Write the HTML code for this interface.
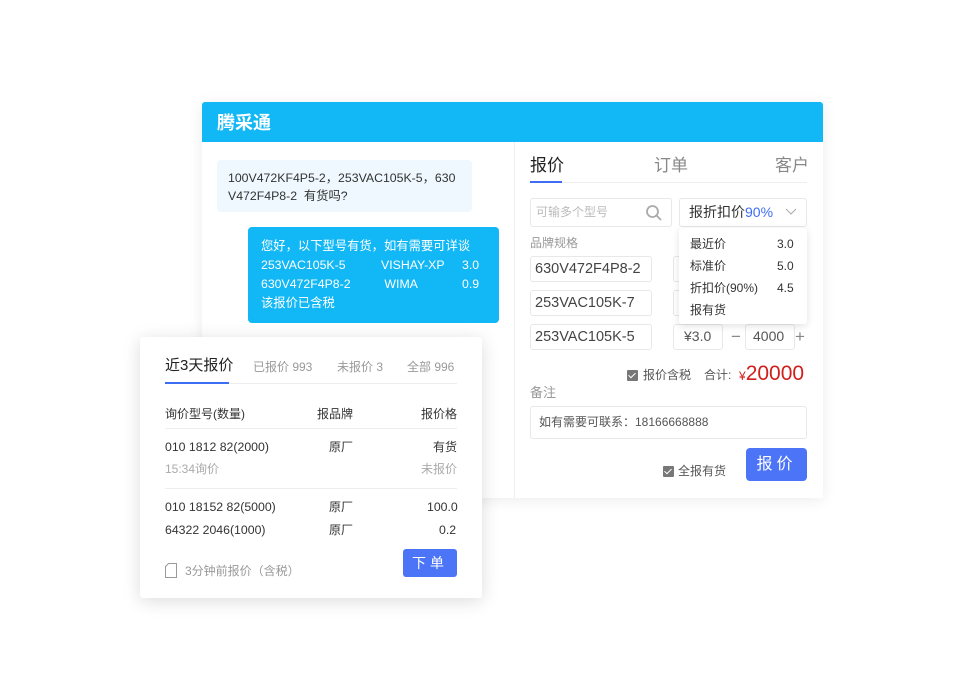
<!DOCTYPE html>
<html><head><meta charset="utf-8"><style>
*{margin:0;padding:0;box-sizing:border-box}
body{width:960px;height:700px;background:#fff;position:relative;overflow:hidden;font-family:"Liberation Sans","Noto Sans CJK SC",sans-serif;color:#333}
.a{position:absolute;white-space:nowrap;line-height:1.25}
.box{position:absolute;border:1px solid #e8e8e8;border-radius:3px;background:#fff}
.chk{position:absolute;width:11px;height:11px;background:#777;border-radius:1px}
.chk:after{content:"";position:absolute;left:3px;top:1px;width:3px;height:6px;border:solid #fff;border-width:0 1.5px 1.5px 0;transform:rotate(45deg)}
</style></head><body>
<div class="a" style="left:202px;top:102px;width:621px;height:396px;background:#fff;box-shadow:0 2px 14px rgba(0,0,0,.08)"></div>
<div class="a" style="left:202px;top:102px;width:621px;height:40px;background:#12b7f5;border-radius:3px 3px 0 0"></div>
<div class="a" style="left:217px;top:112px;font-size:18px;color:#fff;font-weight:bold">腾采通</div>
<div class="a" style="left:514px;top:142px;width:1px;height:356px;background:#eee"></div>

<div class="a" style="left:217px;top:160px;width:255px;height:52px;background:#eef8fe;border-radius:4px"></div>
<div class="a" style="left:228px;top:169px;font-size:12.3px;line-height:18px;color:#333">100V472KF4P5-2，253VAC105K-5，630<br>V472F4P8-2&nbsp; 有货吗?</div>
<div class="a" style="left:248px;top:227px;width:251px;height:96px;background:#12b7f5;border-radius:4px"></div>
<div class="a" style="left:261px;top:237px;font-size:12.3px;line-height:19px;color:#fff">您好，以下型号有货，如有需要可详谈<br>253VAC105K-5<br>630V472F4P8-2<br>该报价已含税</div>
<div class="a" style="left:381px;top:256px;font-size:12.3px;line-height:19px;color:#fff">VISHAY-XP<br>&nbsp;WIMA</div>
<div class="a" style="left:462px;top:256px;font-size:12.3px;line-height:19px;color:#fff;text-align:right">3.0<br>0.9</div>

<div class="a" style="left:530px;top:155px;font-size:17px;color:#222">报价</div>
<div class="a" style="left:654px;top:155px;font-size:17px;color:#888">订单</div>
<div class="a" style="left:775px;top:155px;font-size:17px;color:#888">客户</div>
<div class="a" style="left:530px;top:182px;width:277px;height:1px;background:#eee"></div>
<div class="a" style="left:530px;top:181px;width:32px;height:2px;background:#3d6cf5"></div>

<div class="box" style="left:530px;top:198px;width:142px;height:29px"></div>
<div class="a" style="left:536px;top:205px;font-size:12px;color:#bbb">可输多个型号</div>
<svg class="a" style="left:645px;top:204px" width="18" height="18" viewBox="0 0 18 18"><circle cx="7.5" cy="7.5" r="5.5" fill="none" stroke="#aaa" stroke-width="1.8"/><path d="M11.5 11.5l4.5 4.5" stroke="#aaa" stroke-width="1.8"/></svg>
<div class="box" style="left:679px;top:198px;width:128px;height:29px"></div>
<div class="a" style="left:689px;top:204px;font-size:14px;color:#333">报折扣价<span style="color:#3d6cf5">90%</span></div>
<svg class="a" style="left:785px;top:208px" width="12" height="8"><path d="M1 1l5 5 5-5" fill="none" stroke="#aaa" stroke-width="1"/></svg>

<div class="a" style="left:530px;top:236px;font-size:12px;color:#999">品牌规格</div>
<div class="box" style="left:530px;top:256px;width:122px;height:26px"></div>
<div class="a" style="left:535px;top:260px;font-size:14.5px;color:#444">630V472F4P8-2</div>
<div class="box" style="left:530px;top:290px;width:122px;height:26px"></div>
<div class="a" style="left:535px;top:294px;font-size:14.5px;color:#444">253VAC105K-7</div>
<div class="box" style="left:530px;top:324px;width:122px;height:26px"></div>
<div class="a" style="left:535px;top:328px;font-size:14.5px;color:#444">253VAC105K-5</div>
<div class="box" style="left:673px;top:256px;width:20px;height:26px"></div>
<div class="box" style="left:673px;top:290px;width:20px;height:26px"></div>
<div class="box" style="left:673px;top:324px;width:50px;height:26px"></div>
<div class="a" style="left:684px;top:328px;font-size:14px;color:#555">¥3.0</div>
<div class="a" style="left:731px;top:326px;font-size:17px;color:#888">−</div>
<div class="box" style="left:745px;top:324px;width:50px;height:26px"></div>
<div class="a" style="left:753px;top:328px;font-size:14px;color:#555">4000</div>
<div class="a" style="left:795px;top:326px;font-size:17px;color:#888">+</div>

<div class="a" style="left:679px;top:228px;width:128px;height:96px;background:#fff;border-radius:3px;box-shadow:0 2px 8px rgba(0,0,0,.12)"></div>
<div class="a" style="left:690px;top:233px;font-size:12px;line-height:22px;color:#333">最近价<br>标准价<br>折扣价(90%)<br>报有货</div>
<div class="a" style="left:777px;top:233px;font-size:12px;line-height:22px;color:#333">3.0<br>5.0<br>4.5</div>

<div class="chk" style="left:627px;top:370px"></div>
<div class="a" style="left:643px;top:368px;font-size:12px;color:#555">报价含税</div>
<div class="a" style="left:704px;top:368px;font-size:12px;color:#555">合计:</div>
<div class="a" style="left:739px;top:361px;font-size:21px;color:#d0201c"><span style="font-size:12px">¥</span>20000</div>
<div class="a" style="left:530px;top:385px;font-size:13px;color:#999">备注</div>
<div class="box" style="left:530px;top:406px;width:277px;height:33px"></div>
<div class="a" style="left:539px;top:415px;font-size:12px;color:#555">如有需要可联系：18166668888</div>
<div class="chk" style="left:663px;top:466px"></div>
<div class="a" style="left:678px;top:464px;font-size:12px;color:#555">全报有货</div>
<div class="a" style="left:746px;top:448px;width:61px;height:33px;background:#4c74f7;border-radius:4px;color:#fff;font-size:16px;text-align:center;line-height:33px;letter-spacing:4px">报价</div>

<div class="a" style="left:140px;top:337px;width:342px;height:261px;background:#fff;border-radius:3px;box-shadow:0 3px 18px rgba(0,0,0,.14)"></div>
<div class="a" style="left:165px;top:357px;font-size:15px;color:#222">近3天报价</div>
<div class="a" style="left:253px;top:360px;font-size:12px;color:#999">已报价 993</div>
<div class="a" style="left:337px;top:360px;font-size:12px;color:#999">未报价 3</div>
<div class="a" style="left:407px;top:360px;font-size:12px;color:#999">全部 996</div>
<div class="a" style="left:165px;top:383px;width:292px;height:1px;background:#eee"></div>
<div class="a" style="left:165px;top:382px;width:64px;height:2px;background:#3d6cf5"></div>
<div class="a" style="left:165px;top:407px;font-size:12px;color:#333">询价型号(数量)</div>
<div class="a" style="left:317px;top:407px;font-size:12px;color:#333">报品牌</div>
<div class="a" style="left:421px;top:407px;font-size:12px;color:#333">报价格</div>
<div class="a" style="left:165px;top:428px;width:292px;height:1px;background:#eee"></div>
<div class="a" style="left:165px;top:440px;font-size:12.3px;color:#333">010 1812 82(2000)</div>
<div class="a" style="left:329px;top:440px;font-size:12px;color:#333">原厂</div>
<div class="a" style="left:433px;top:440px;font-size:12px;color:#333">有货</div>
<div class="a" style="left:165px;top:462px;font-size:12px;color:#aaa">15:34询价</div>
<div class="a" style="left:421px;top:462px;font-size:12px;color:#aaa">未报价</div>
<div class="a" style="left:165px;top:488px;width:292px;height:1px;background:#eee"></div>
<div class="a" style="left:165px;top:500px;font-size:12.3px;color:#333">010 18152 82(5000)</div>
<div class="a" style="left:329px;top:500px;font-size:12px;color:#333">原厂</div>
<div class="a" style="left:427px;top:500px;font-size:12.3px;color:#333">100.0</div>
<div class="a" style="left:165px;top:523px;font-size:12.3px;color:#333">64322 2046(1000)</div>
<div class="a" style="left:329px;top:523px;font-size:12px;color:#333">原厂</div>
<div class="a" style="left:439px;top:523px;font-size:12.3px;color:#333">0.2</div>
<svg class="a" style="left:165px;top:563px" width="12" height="15"><path d="M3.5 .5H11.5V14.5H.5V3.5Z" fill="none" stroke="#999"/></svg>
<div class="a" style="left:185px;top:564px;font-size:12px;color:#999">3分钟前报价（含税）</div>
<div class="a" style="left:403px;top:549px;width:54px;height:28px;background:#4c74f7;border-radius:3px;color:#fff;font-size:14px;text-align:center;line-height:28px;letter-spacing:4px">下单</div>
</body></html>
